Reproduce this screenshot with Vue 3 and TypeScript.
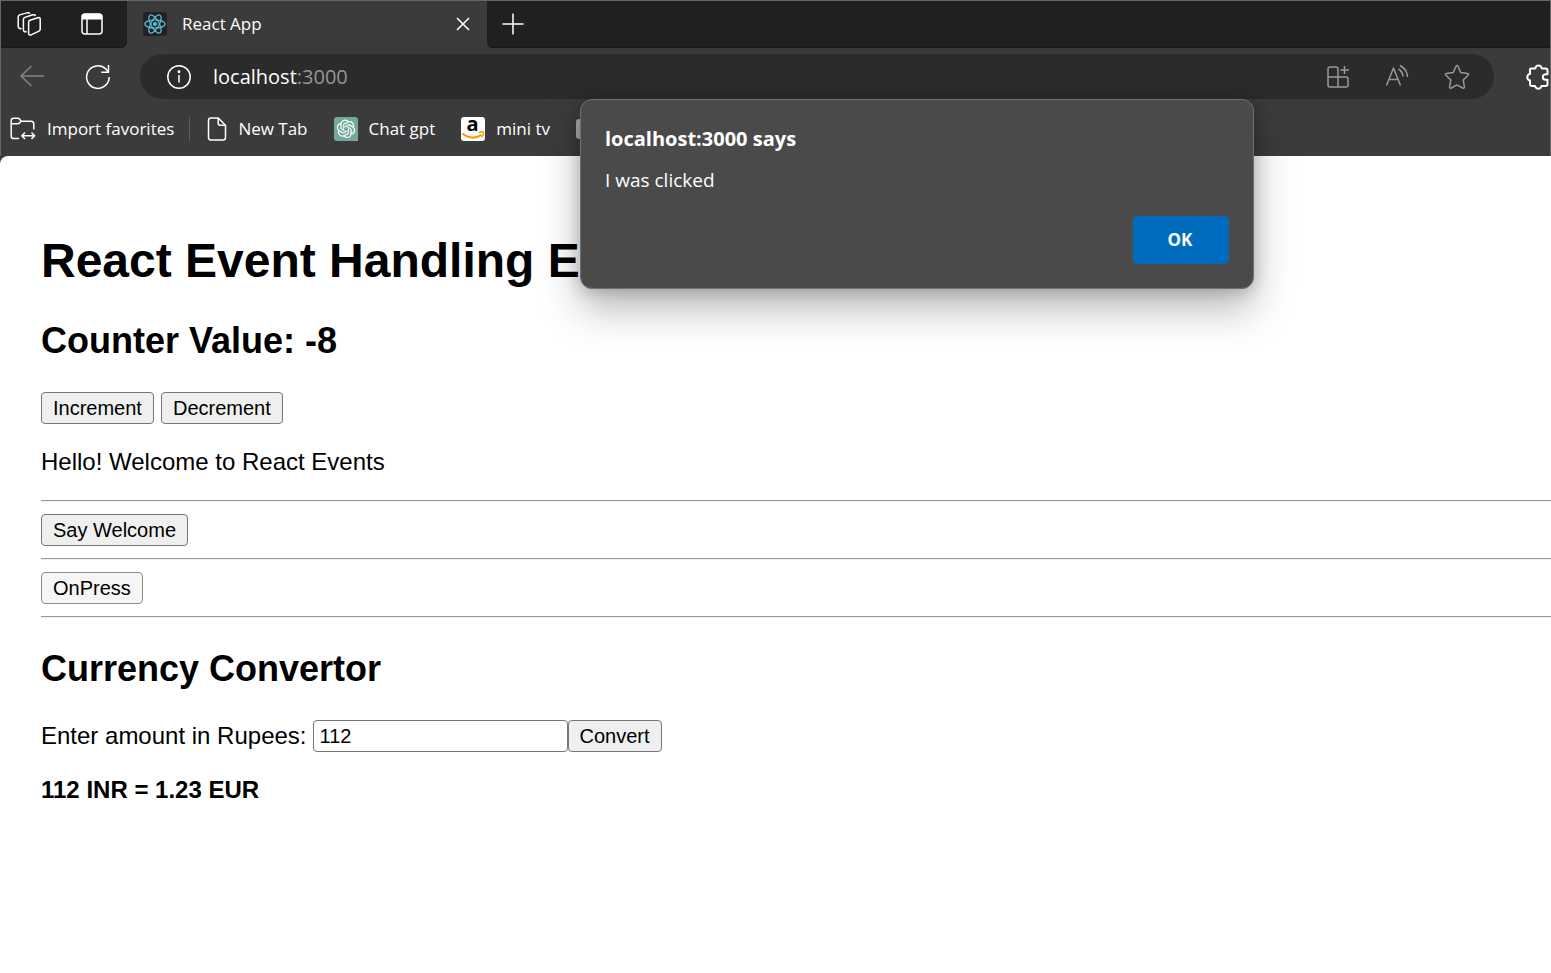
<script setup lang="ts">
import { ref } from 'vue'

const count = ref<number>(-8)
const message = ref<string>('Hello! Welcome to React Events')
const amount = ref<string>('112')
const result = ref<string>('112 INR = 1.23 EUR')
const alertText = ref<string>('I was clicked')
const alertOpen = ref<boolean>(true)

function sayWelcome(): void {
  message.value = 'Hello! Welcome to React Events'
}

function press(): void {
  alertText.value = 'I was clicked'
  alertOpen.value = true
}

function convert(): void {
  const rupees = Number(amount.value)
  result.value = `${amount.value} INR = ${(rupees * 0.011).toFixed(2)} EUR`
}
</script>

<template>
  <div class="window">
    <header class="chrome">
      <div class="tabstrip">
        <div class="strip-left">
          <button class="icon-btn" aria-label="Workspaces">
            <svg width="24" height="24" viewBox="0 0 24 24" class="line">
              <path d="M13 8.2 20.8 5.7Q23.2 5 23.2 7.2V17Q23.2 18.5 22 19.1L14.6 22.7Q11.6 23.9 11.6 21V10.4Q11.6 8.8 13 8.2Z" />
              <path d="M9.6 19.6Q6.4 20.4 6.4 17.6V7.5Q6.4 6 7.8 5.4L15.8 2.8Q18 2.2 18.4 4" />
              <path d="M4.6 16.6Q1.2 17 1.2 14.2V5Q1.2 3.5 2.6 2.9L10 .9Q12.4.3 12.8 1.8" />
            </svg>
          </button>
          <button class="icon-btn" aria-label="Tab actions">
            <svg width="22" height="22" viewBox="0 0 22 22" class="line">
              <rect x="1" y="1" width="20" height="20" rx="3" />
              <path d="M1.5 5V4Q1.5 1.5 4 1.5H18Q20.5 1.5 20.5 4V5.8H1.5Z" fill="#fff" />
              <path d="M6 6V21" />
            </svg>
          </button>
        </div>
        <div class="tab">
          <svg class="favicon" width="24" height="24" viewBox="0 0 24 24">
            <rect width="24" height="24" rx="3" fill="#222" />
            <g fill="none" stroke="#58c4dc" stroke-width="1.2">
              <ellipse cx="12" cy="12" rx="10.2" ry="4" />
              <ellipse cx="12" cy="12" rx="10.2" ry="4" transform="rotate(60 12 12)" />
              <ellipse cx="12" cy="12" rx="10.2" ry="4" transform="rotate(120 12 12)" />
            </g>
            <circle cx="12" cy="12" r="2" fill="#58c4dc" />
          </svg>
          <span class="tab-title">React App</span>
          <button class="icon-btn" aria-label="Close tab">
            <svg width="14" height="14" viewBox="0 0 14 14" class="line"><path d="M1 1 13 13M13 1 1 13" /></svg>
          </button>
        </div>
        <button class="icon-btn new-tab" aria-label="New tab">
          <svg width="22" height="22" viewBox="0 0 22 22" class="line"><path d="M.5 11H21.5M11 .5V21.5" /></svg>
        </button>
      </div>

      <nav class="toolbar" aria-label="Navigation">
        <button class="icon-btn dim" aria-label="Back">
          <svg width="24" height="24" viewBox="0 0 24 24" class="line"><path d="M11.5 1 1 11 11.5 21M1 11H24" /></svg>
        </button>
        <button class="icon-btn reload" aria-label="Refresh">
          <svg width="26" height="26" viewBox="0 0 26 26" class="line">
            <path d="M24.2 13A11.3 11.3 0 1 1 20.6 4.8L23.2 7.8M23.5 1V8.2H16.3" />
          </svg>
        </button>
        <div class="address">
          <svg width="26" height="26" viewBox="0 0 26 26" class="line">
            <circle cx="13" cy="13" r="11.2" />
            <path d="M13 11V18.5" />
            <circle cx="13" cy="7.8" r=".7" fill="#fff" />
          </svg>
          <span class="url">localhost<span class="port">:3000</span></span>
          <button class="icon-btn muted" aria-label="App available">
            <svg width="24" height="24" viewBox="0 0 24 24" class="line">
              <path d="M12 12V4Q12 2 10 2H4Q2 2 2 4V20Q2 22 4 22H20Q22 22 22 20V14Q22 12 20 12H2M12 12V22M18.500 1V9M14.500 5H23" />
            </svg>
          </button>
          <button class="icon-btn muted" aria-label="Read aloud">
            <svg width="24" height="26" viewBox="0 0 24 26" class="line">
              <path d="M1.500 21.500 8.500 4 15.500 21.500M4 15.500H13M13.500 5Q17.500 7.500 18 12.500M15 1.500Q22 5 22.500 13" />
            </svg>
          </button>
          <button class="icon-btn muted" aria-label="Add to favorites">
            <svg width="26" height="26" viewBox="0 0 26 26" class="line">
              <path d="M12 2.300Q13 .6 14 2.300L16.700 8.500 23.500 9.400Q25.300 9.900 24 11.300L19.200 16 20.400 22.700Q20.500 24.700 18.700 24L13 20.800 7.300 24Q5.500 24.700 5.600 22.700L6.800 16 2 11.300Q.7 9.900 2.500 9.400L9.300 8.500Z" />
            </svg>
          </button>
        </div>
        <button class="icon-btn extensions" aria-label="Extensions">
          <svg width="26" height="26" viewBox="0 0 26 26" class="line thick">
            <path d="M5 4.500H9.200Q9.800 1.500 12.500 1.500T15.800 4.500H19.500Q21.500 4.500 21.500 6.500V10.200H19.500Q16.800 10.500 16.800 13T19.500 15.800H21.500V20Q21.500 22 19.500 22H15.500Q14.800 24.700 12.300 24.700T9 22H6Q4 22 4 20V16.500Q1.300 15.800 1.300 13.200T4 9.900V5.500Q4 4.500 5 4.500Z" />
          </svg>
        </button>
      </nav>

      <nav class="favorites" aria-label="Favorites">
        <a href="#import" class="favorite">
          <svg width="26" height="24" viewBox="0 0 26 24" class="line">
            <path d="M9 21.500H3.800Q1.200 21.500 1.200 18.900V3.500Q1.200 1.200 3.500 1.200H7.500Q9 1.200 9.800 2.300L11 4.300H21Q23.800 4.300 23.800 7.100V12.500M1.500 6.700H7.500Q9 6.700 9.800 5.700L11 4.300M12.500 18.700H24M15 15.500 11.800 18.700 15 22M21.500 15.500 24.700 18.700 21.500 22" />
          </svg>
          <span>Import favorites</span>
        </a>
        <span class="separator"></span>
        <a href="#newtab" class="favorite">
          <svg width="20" height="24" viewBox="0 0 20 24" class="line">
            <path d="M11.200 1H4Q1.500 1 1.500 3.500V20.500Q1.500 23 4 23H16Q18.500 23 18.500 20.500V8.300ZM11.200 1V6.300Q11.200 8.300 13.200 8.300H18.500" />
          </svg>
          <span>New Tab</span>
        </a>
        <a href="#chat" class="favorite">
          <svg width="24" height="24" viewBox="0 0 24 24">
            <path d="M3 0H21Q24 0 24 3V24H3Q0 24 0 21V3Q0 0 3 0Z" fill="#74aa9c" />
            <path transform="translate(2.800 2.600) scale(.77)" fill="#fff" d="M22.2819 9.8211a5.9847 5.9847 0 0 0-.5157-4.9108 6.0462 6.0462 0 0 0-6.5098-2.9A6.0651 6.0651 0 0 0 4.9807 4.1818a5.9847 5.9847 0 0 0-3.9977 2.9 6.0462 6.0462 0 0 0 .7427 7.0966 5.98 5.98 0 0 0 .511 4.9107 6.051 6.051 0 0 0 6.5146 2.9001A5.9847 5.9847 0 0 0 13.2599 24a6.0557 6.0557 0 0 0 5.7718-4.2058 5.9894 5.9894 0 0 0 3.9977-2.9001 6.0557 6.0557 0 0 0-.7475-7.0729zm-9.022 12.6081a4.4755 4.4755 0 0 1-2.8764-1.0408l.1419-.0804 4.7783-2.7582a.7948.7948 0 0 0 .3927-.6813v-6.7369l2.02 1.1686a.071.071 0 0 1 .038.052v5.5826a4.504 4.504 0 0 1-4.4945 4.4944zm-9.6607-4.1254a4.4708 4.4708 0 0 1-.5346-3.0137l.142.0852 4.783 2.7582a.7712.7712 0 0 0 .7806 0l5.8428-3.3685v2.3324a.0804.0804 0 0 1-.0332.0615L9.74 19.9502a4.4992 4.4992 0 0 1-6.1408-1.6464zM2.3408 7.8956a4.485 4.485 0 0 1 2.3655-1.9728V11.6a.7664.7664 0 0 0 .3879.6765l5.8144 3.3543-2.0201 1.1685a.0757.0757 0 0 1-.071 0l-4.8303-2.7865A4.504 4.504 0 0 1 2.3408 7.872zm16.5963 3.8558L13.1038 8.364 15.1192 7.2a.0757.0757 0 0 1 .071 0l4.8303 2.7913a4.4944 4.4944 0 0 1-.6765 8.1042v-5.6772a.79.79 0 0 0-.407-.667zm2.0107-3.0231l-.142-.0852-4.7735-2.7818a.7759.7759 0 0 0-.7854 0L9.409 9.2297V6.8974a.0662.0662 0 0 1 .0284-.0615l4.8303-2.7866a4.4992 4.4992 0 0 1 6.6802 4.66zM8.3065 12.863l-2.02-1.1638a.0804.0804 0 0 1-.038-.0567V6.0742a4.4992 4.4992 0 0 1 7.3757-3.4537l-.142.0805L8.704 5.459a.7948.7948 0 0 0-.3927.6813zm1.0976-2.3654l2.602-1.4998 2.6069 1.4998v2.9994l-2.5974 1.4997-2.6067-1.4997Z" />
          </svg>
          <span>Chat gpt</span>
        </a>
        <a href="#minitv" class="favorite">
          <svg width="24" height="24" viewBox="0 0 24 24" class="amazon">
            <rect width="24" height="24" rx="3" fill="#fff" />
            <text x="11.500" y="14" text-anchor="middle" class="amazon-a">a</text>
            <path d="M1.500 16.500Q11 24 20.500 17.800" fill="none" stroke="#f90" stroke-width="2.200" />
            <path d="M17.500 15.800Q21 14 22.600 15.200 22.800 18 20.800 20.300" fill="none" stroke="#f90" stroke-width="1.500" />
          </svg>
          <span>mini tv</span>
        </a>
        <span class="favorite-edge"></span>
      </nav>
    </header>

    <main class="page">
      <h1>React Event Handling Example</h1>
      <h2>Counter Value: {{ count }}</h2>
      <div class="actions">
        <button class="native" @click="count++">Increment</button>
        <button class="native" @click="count--">Decrement</button>
      </div>
      <p>{{ message }}</p>
      <hr />
      <button class="native" @click="sayWelcome">Say Welcome</button>
      <hr />
      <button class="native hovered" @click="press">OnPress</button>
      <hr />
      <h2 class="converter-title">Currency Convertor</h2>
      <form class="converter" @submit.prevent="convert">
        <label for="rupees">Enter amount in Rupees:</label>
        <input id="rupees" v-model="amount" type="text" />
        <button class="native" type="submit">Convert</button>
      </form>
      <p class="result">{{ result }}</p>
    </main>

    <div v-if="alertOpen" class="dialog" role="alertdialog" aria-labelledby="dialog-title" aria-describedby="dialog-text">
      <div id="dialog-title" class="dialog-title">localhost:3000 says</div>
      <div id="dialog-text" class="dialog-text">{{ alertText }}</div>
      <button class="ok" @click="alertOpen = false">OK</button>
    </div>
  </div>
</template>

<style>
body {
  margin: 0;
  background: #fff;
  overflow-x: hidden;
}
</style>

<style scoped>
* {
  box-sizing: border-box;
}
.window {
  position: relative;
  min-height: 100vh;
  overflow: hidden;
  background: linear-gradient(#3b3b3b 170px, #fff 170px);
  font-family: "Open Sans", "Noto Sans", sans-serif;
  color: #fff;
}
.chrome {
  background: #3b3b3b;
  border: 1px solid #666;
  border-bottom: 0;
}
.tabstrip {
  display: flex;
  height: 47px;
  background: #3b3b3b;
}
.strip-left {
  display: flex;
  align-items: center;
  gap: 40px;
  width: 126px;
  padding: 0 0 1px 16px;
  border-radius: 0 0 6px 0;
  background: #202020;
  box-shadow: inset 0 -1px 1px #191919;
}
.icon-btn {
  display: flex;
  flex: none;
  align-items: center;
  justify-content: center;
  padding: 0;
  border: 0;
  background: none;
  color: #fff;
}
.line {
  flex: none;
  fill: none;
  stroke: currentColor;
  stroke-width: 1.5;
  stroke-linejoin: round;
}
.thick {
  stroke-width: 2;
}
.tab {
  display: flex;
  align-items: center;
  width: 360px;
  padding: 0 17px 2px 16px;
  background: #3b3b3b;
}
.tab-title {
  flex: 1;
  margin-left: 15px;
  font-size: 17px;
  line-height: 24px;
}
.new-tab {
  flex: 1;
  justify-content: flex-start;
  padding: 0 0 2px 15px;
  border-radius: 0 0 0 6px;
  background: #202020;
  box-shadow: inset 0 -1px 1px #191919;
}
.toolbar {
  display: flex;
  align-items: center;
  height: 57px;
  padding-left: 19px;
}
.dim {
  color: #858585;
}
.muted {
  color: #999;
}
.reload {
  margin-left: 41px;
}
.address {
  display: flex;
  flex: 1;
  align-items: center;
  gap: 35px;
  height: 45px;
  margin-left: 29px;
  padding: 0 24px 0 26px;
  border-radius: 23px;
  background: #2b2b2b;
}
.url {
  flex: 1;
  margin-left: -14px;
  font-size: 20px;
  line-height: 28px;
}
.port {
  color: #969696;
}
.extensions {
  width: 24px;
  margin-left: 32px;
  justify-content: flex-start;
}
.favorites {
  display: flex;
  align-items: center;
  height: 51px;
  padding: 0 0 3px 9px;
  font-size: 17px;
  line-height: 24px;
  white-space: nowrap;
}
.favorite {
  display: flex;
  align-items: center;
  gap: 11px;
  margin-right: 26px;
  color: #fff;
  text-decoration: none;
}
.separator {
  width: 1px;
  height: 24px;
  margin: 0 17px 0 -11px;
  background: #5c5c5c;
}
.favorite-edge {
  width: 20px;
  height: 20px;
  border-radius: 3px;
  background: #aaa;
}
.amazon {
  overflow: visible;
}
.amazon-a {
  font: bold 20px "Open Sans", sans-serif;
  fill: #000;
}
.page {
  padding: 76px 0 24px 41px;
  border-top-left-radius: 8px;
  background: #fff;
  font-family: "Liberation Sans", Arial, sans-serif;
  font-size: 24px;
  line-height: 28px;
  color: #000;
}
h1 {
  margin: 0 0 30px;
  font-size: 48px;
  line-height: 58px;
  white-space: nowrap;
}
h2 {
  margin: 0 0 30px;
  font-size: 36px;
  line-height: 42px;
}
.actions {
  display: flex;
  gap: 7px;
}
p {
  margin: 24px 0;
}
hr {
  height: 2px;
  margin: 12px 0;
  border: 0;
  border-top: 1px solid #9a9a9a;
  border-bottom: 1px solid #eee;
}
.native {
  display: block;
  height: 32px;
  padding: 0 11px;
  border: 1px solid #767676;
  border-radius: 4px;
  background: #efefef;
  font: 20px/28px "Liberation Sans", Arial, sans-serif;
  color: #000;
}
.hovered {
  border-color: #8d8d8d;
  background: #f5f5f5;
}
.converter-title {
  margin-top: 30px;
}
.converter {
  display: flex;
  align-items: center;
}
.converter input {
  width: 255px;
  height: 32px;
  margin-left: 6px;
  padding: 0 6px;
  border: 1px solid #767676;
  border-radius: 4px;
  background: #fff;
  font: 20px/28px "Liberation Sans", Arial, sans-serif;
  color: #000;
}
.result {
  font-weight: bold;
}
.dialog {
  position: absolute;
  top: 99px;
  left: 580px;
  display: flex;
  flex-direction: column;
  width: 674px;
  padding: 24px;
  border: 1px solid #707070;
  border-radius: 12px;
  background: #4a4a4a;
  box-shadow: 0 20px 40px rgba(0, 0, 0, 0.28), 0 2px 16px rgba(0, 0, 0, 0.2);
}
.dialog-title {
  font-size: 20px;
  font-weight: bold;
  line-height: 30px;
}
.dialog-text {
  margin-top: 12px;
  font-size: 19px;
  line-height: 28px;
}
.ok {
  align-self: flex-end;
  width: 96px;
  height: 48px;
  margin-top: 22px;
  padding: 0 2px 2px 0;
  border: 0;
  border-radius: 5px;
  background: #006cbe;
  font: bold 17px "Open Sans", "Noto Sans", sans-serif;
  color: #fff;
}
</style>
